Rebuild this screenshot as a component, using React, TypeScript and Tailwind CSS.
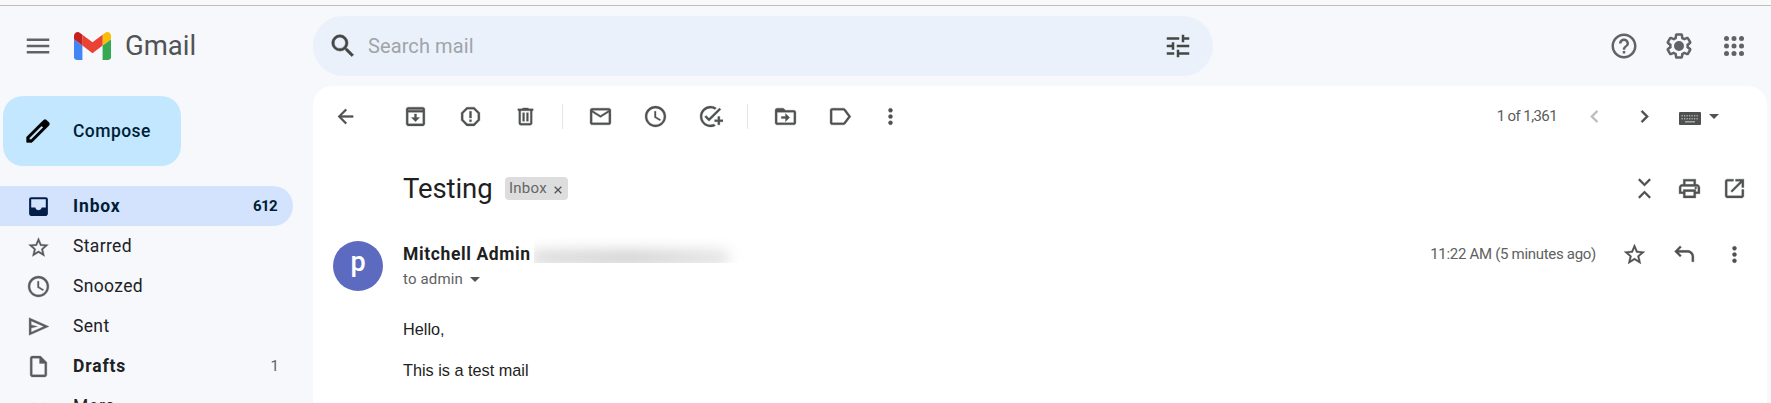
import React from 'react';
import {
  MdMenu, MdSearch, MdTune, MdHelpOutline, MdArrowBack, MdMailOutline, MdAccessTime, MdAddTask,
  MdMoreVert, MdChevronLeft, MdChevronRight, MdStarBorder, MdOutlinePrint,
} from 'react-icons/md';

type IconProps = { className?: string };

function Svg({ d, className }: IconProps & { d: string }) {
  return (
    <svg viewBox="0 0 24 24" fill="currentColor" fillRule="evenodd" className={className}>
      <path d={d} />
    </svg>
  );
}

const INBOX = 'M19 3H5C3.9 3 3 3.9 3 5v14c0 1.1.9 2 2 2h14c1.1 0 2-.9 2-2V5c0-1.1-.9-2-2-2zM5 5h14v8h-4c0 1-1 2.5-3 2.5S9 14 9 13H5z';
const ARCHIVE = 'M19 3H5C3.9 3 3 3.9 3 5v14c0 1.1.9 2 2 2h14c1.1 0 2-.9 2-2V5c0-1.1-.9-2-2-2zM5 5.2h14v.8H5zM5 8h14v11H5zM11 9.5h2V13h3l-4 4-4-4h3z';
const SPAM = 'M8.3 3h7.4L21 8.3v7.4L15.7 21H8.3L3 15.7V8.3zM9.1 5L5 9.1v5.8L9.1 19h5.8l4.1-4.1V9.1L14.9 5zM11 7h2v6.5h-2zM11 15h2v2h-2z';
const TRASH = 'M15 4V3H9v1H4v2h1v13c0 1.1.9 2 2 2h10c1.1 0 2-.9 2-2V6h1V4zM7 6h10v13H7zM9 8h2v9H9zM13 8h2v9h-2z';
const MOVE = 'M20 6h-8l-2-2H4c-1.1 0-2 .9-2 2v12c0 1.1.9 2 2 2h16c1.1 0 2-.9 2-2V8c0-1.1-.9-2-2-2zM4 8h16v10H4zM12 9l4 4-4 4v-3H8v-2h4z';
const LABEL = 'M4 4h11c.7 0 1.3.3 1.6.8L22 12l-5.4 7.2c-.3.5-.9.8-1.6.8H4c-1.1 0-2-.9-2-2V6c0-1.1.9-2 2-2zM4 6v12h11l4.5-6L15 6z';
const SEND = 'M3 3.5v17L22 12zM5 6.6L17.1 12 5 17.4V13.5L11 12 5 10.5z';
const DRAFT = 'M14 2H6c-1.1 0-2 .9-2 2v16c0 1.1.9 2 2 2h12c1.1 0 2-.9 2-2V8zM6 4h7v5h5v11H6z';
const GEAR = 'M13.85 22.25h-3.7c-.74 0-1.36-.54-1.45-1.27l-.27-1.89c-.27-.14-.53-.29-.79-.46l-1.8.72c-.7.26-1.47-.03-1.81-.65L2.2 15.53c-.35-.66-.2-1.44.36-1.88l1.53-1.19c-.01-.15-.02-.3-.02-.46 0-.15.01-.31.02-.46l-1.52-1.19c-.59-.45-.74-1.26-.37-1.88l1.85-3.19c.34-.62 1.11-.9 1.79-.63l1.81.73c.26-.17.52-.32.78-.46l.27-1.91c.09-.7.71-1.25 1.44-1.25h3.7c.74 0 1.36.54 1.45 1.27l.27 1.89c.27.14.53.29.79.46l1.8-.72c.71-.26 1.48.03 1.82.65l1.84 3.18c.36.66.2 1.44-.36 1.88l-1.52 1.19c.01.15.02.3.02.46s-.01.31-.02.46l1.52 1.19c.56.45.72 1.23.37 1.86l-1.86 3.22c-.34.62-1.11.9-1.8.63l-1.8-.72c-.26.17-.52.32-.78.46l-.27 1.91c-.1.68-.72 1.22-1.46 1.22zm-3.23-2h2.76l.37-2.55.53-.22c.44-.18.88-.44 1.34-.78l.45-.34 2.38.96 1.38-2.4-2.03-1.58.07-.56c.03-.26.06-.51.06-.78s-.03-.53-.06-.78l-.07-.56 2.03-1.58-1.39-2.4-2.39.96-.45-.35c-.42-.32-.87-.58-1.33-.77l-.52-.22-.37-2.55h-2.76l-.37 2.55-.53.21c-.44.19-.88.44-1.34.79l-.45.33-2.38-.95-1.39 2.39 2.03 1.58-.07.56a7 7 0 0 0-.06.79c0 .26.02.53.06.78l.07.56-2.03 1.58 1.38 2.4 2.39-.96.45.35c.43.33.86.58 1.33.77l.53.22zM12 8a4 4 0 1 0 0 8 4 4 0 0 0 0-8z';
const OPEN = 'M11 3H5c-1.1 0-2 .9-2 2v14c0 1.1.9 2 2 2h14c1.1 0 2-.9 2-2v-6h-2v6H5V5h6zM13 3h8v8h-2V6.4l-9.3 9.3-1.4-1.4L17.6 5H13z';
const REPLY = 'M7.7 3.7L9.1 5.1 6.2 8H15c3.3 0 6 2.7 6 6v5h-2v-5c0-2.2-1.8-4-4-4H6.2l2.9 2.9-1.4 1.4L2.4 9z';
const COLLAPSE = 'M6 3.9L7.4 2.5 12 7.1l4.6-4.6L18 3.9l-6 6zM6 20.1l1.4 1.4 4.6-4.6 4.6 4.6 1.4-1.4-6-6z';
const PENCIL = 'M20.41 4.94l-1.35-1.35c-.78-.78-2.05-.78-2.83 0L3 16.82V21h4.18L20.41 7.77c.79-.78.79-2.05 0-2.83zM6.41 19.06L5 19v-1.36l9.82-9.82 1.41 1.41z';

function Logo() {
  return (
    <svg viewBox="52 42 88 66" className="h-[28px] w-[37px] shrink-0">
      <path fill="#4285f4" d="M58 108h14V74L52 59v43c0 3.32 2.69 6 6 6" />
      <path fill="#34a853" d="M120 108h14c3.32 0 6-2.69 6-6V59l-20 15" />
      <path fill="#fbbc04" d="M120 48v26l20-15v-8c0-7.42-8.47-11.65-14.4-7.2" />
      <path fill="#ea4335" d="M72 74V48l24 18 24-18v26L96 92" />
      <path fill="#c5221f" d="M52 51v8l20 15V48l-5.6-4.2c-5.94-4.45-14.4-.22-14.4 7.2" />
    </svg>
  );
}

function Apps() {
  return (
    <svg viewBox="0 0 24 24" fill="currentColor" className="size-[30px]">
      {[6, 12, 18].map((y) => [6, 12, 18].map((x) => <circle key={`${x}-${y}`} cx={x} cy={y} r="2" />))}
    </svg>
  );
}

function Keyboard() {
  return (
    <svg viewBox="0 0 22 13" className="h-[13px] w-[22px]">
      <rect width="22" height="13" rx="1" fill="#4f5150" />
      {[3, 6].map((y) => [2.5, 5, 7.5, 10, 12.5, 15, 17.5].map((x) => (
        <rect key={`${x}-${y}`} x={x} y={y} width="1.3" height="1.5" fill="#aaa" />
      )))}
      <rect x="6" y="9.2" width="10" height="1.2" fill="#bbb" />
    </svg>
  );
}

function Caret() {
  return (
    <svg viewBox="0 0 10 5" className="h-[5px] w-[10px]" fill="#505352">
      <path d="M0 0h10L5 5z" />
    </svg>
  );
}

function Cell({ children }: { children: React.ReactNode }) {
  return <button className="flex w-[55px] shrink-0 justify-center">{children}</button>;
}

function NavRow({ icon, label, count, active, bold }: {
  icon: React.ReactNode; label: string; count?: string; active?: boolean; bold?: boolean;
}) {
  const row = active ? 'bg-[#d3e3fd] text-[#001d35]' : 'text-[#202124]';
  const weight = active || bold ? 'font-bold tracking-[0.85px]' : 'tracking-[0.35px]';
  return (
    <a className={`flex h-10 w-[293px] shrink-0 items-center rounded-r-[20px] pl-[26px] pr-[15px] ${row}`}>
      <span className={active ? 'text-[#041e49]' : 'text-[#5a5c5c] [&_svg]:stroke-current [&_svg]:stroke-[0.3px]'}>{icon}</span>
      <span className={`ml-[22px] flex-1 text-[17.5px] ${weight}`}>{label}</span>
      {count && <span className={active ? 'mr-px text-[15px] font-bold tracking-[-0.6px]' : '-mr-px text-[15px] text-[#5f6368]'}>{count}</span>}
    </a>
  );
}

function Header() {
  return (
    <header className="flex h-[80px] shrink-0 items-center pl-[23px] pr-[22px] text-[#5f6368]">
      <MdMenu className="size-[30px]" />
      <div className="ml-[21px] flex w-[239px] items-center">
        <Logo />
        <span className="ml-[14px] text-[27.5px] text-[#505355]">Gmail</span>
      </div>
      <div className="flex h-[60px] w-[900px] items-center rounded-full bg-[#eaf1fb] pl-[15px] pr-[20px] text-[#444746]">
        <MdSearch className="size-[30px] stroke-current stroke-[0.4px]" />
        <span className="ml-[9px] flex-1 pl-px text-[20px] tracking-[0.1px] text-[#a0a4a9]">Search mail</span>
        <MdTune className="size-[30px]" />
      </div>
      <div className="ml-auto flex gap-[25px]">
        <MdHelpOutline className="size-[30px]" />
        <Svg d={GEAR} className="size-[30px]" />
        <Apps />
      </div>
    </header>
  );
}

function Sidebar() {
  return (
    <nav className="flex w-[313px] shrink-0 flex-col pt-[10px]">
      <button className="mb-[20px] ml-[3px] flex h-[70px] w-[178px] shrink-0 items-center rounded-[20px] bg-[#c2e7ff] pl-[20px] text-[17.5px] font-medium tracking-[0.45px] text-[#001d35]">
        <Svg d={PENCIL} className="size-[30px] stroke-black stroke-[0.6px] text-black" />
        <span className="ml-[20px]">Compose</span>
      </button>
      <NavRow active icon={<Svg d={INBOX} className="size-[25px]" />} label="Inbox" count="612" />
      <NavRow icon={<MdStarBorder className="mt-[2px] size-[25px] scale-95" />} label="Starred" />
      <NavRow icon={<MdAccessTime className="size-[25px]" />} label="Snoozed" />
      <NavRow icon={<Svg d={SEND} className="size-[25px]" />} label="Sent" />
      <NavRow bold icon={<Svg d={DRAFT} className="size-[25px]" />} label="Drafts" count="1" />
      <NavRow
        icon={<svg viewBox="0 0 24 24" className="size-[25px]" fill="none"><path d="M6 9l6 6 6-6" strokeWidth="2" /></svg>}
        label="More"
      />
    </nav>
  );
}

function Toolbar() {
  return (
    <div className="flex h-[61px] shrink-0 items-center pl-[5px] text-[#4f5251] [&_button_svg]:stroke-current [&_button_svg]:stroke-[0.3px]">
      <Cell><MdArrowBack className="size-[23px]" /></Cell>
      <div className="w-[15px]" />
      <Cell><Svg d={ARCHIVE} className="size-[25px]" /></Cell>
      <Cell><Svg d={SPAM} className="size-[25px]" /></Cell>
      <Cell><Svg d={TRASH} className="size-[23px]" /></Cell>
      <div className="ml-[9px] mr-[10px] h-[25px] w-px bg-[#e6e6e6]" />
      <Cell><MdMailOutline className="size-[25px]" /></Cell>
      <Cell><MdAccessTime className="size-[25px]" /></Cell>
      <Cell><MdAddTask className="size-[25px]" /></Cell>
      <div className="ml-[9px] mr-[10px] h-[25px] w-px bg-[#e6e6e6]" />
      <Cell><Svg d={MOVE} className="size-[25px]" /></Cell>
      <Cell><Svg d={LABEL} className="size-[25px]" /></Cell>
      <Cell><MdMoreVert className="-ml-[10px] size-[25px]" /></Cell>
      <span className="ml-auto text-[15px] tracking-[-0.6px] text-[#5a5d5c]">1 of 1,361</span>
      <MdChevronLeft className="ml-[25px] size-[25px] stroke-current stroke-[0.3px] text-[#bcbdbd]" />
      <MdChevronRight className="ml-[25px] size-[25px] stroke-current stroke-[0.4px]" />
      <span className="ml-[22px] mt-[3px]"><Keyboard /></span>
      <span className="-mt-px ml-[8px] mr-[48px]"><Caret /></span>
    </div>
  );
}

function Message() {
  return (
    <>
      <div className="flex h-[83px] shrink-0 items-center pl-[90px] pr-[20px] text-[#4f5251]">
        <h1 className="w-[90px] whitespace-nowrap text-[27.5px] tracking-[-0.1px] text-[#1f1f1f]">Testing</h1>
        <span className="ml-[12px] flex h-[23px] w-[63px] items-center rounded-[4px] bg-[#ddd] pl-[4px] text-[15px] tracking-[0.25px] text-[#666]">
          Inbox
          <svg viewBox="0 0 8 8" className="ml-[7px] mt-[3px] size-[8px]" stroke="#555" strokeWidth="1.3"><path d="M.7.7l6.6 6.6M7.3.7L.7 7.3" /></svg>
        </span>
        <div className="ml-auto flex gap-[20px] [&_svg]:stroke-current [&_svg]:stroke-[0.3px]">
          <Svg d={COLLAPSE} className="size-[25px]" />
          <MdOutlinePrint className="size-[25px]" />
          <Svg d={OPEN} className="size-[25px]" />
        </div>
      </div>
      <div className="flex h-[72px] shrink-0 pl-[20px] pr-[20px] pt-[11px]">
        <div className="flex size-[50px] items-center justify-center rounded-full bg-[#5c6bc0] pb-[7px] text-[27px] font-medium text-white">p</div>
        <div className="ml-[20px]">
          <div className="flex h-[27px] items-center">
            <span className="whitespace-nowrap text-[17.5px] font-bold tracking-[0.62px] text-[#1f1f1f]">Mitchell Admin</span>
            <div className="mt-[-10px] ml-[3px] flex h-[26px] w-[214px] items-end overflow-hidden">
              <div className="mb-[-3px] ml-[-4px] h-[16px] w-[200px] rounded-full bg-linear-to-r from-[#dcdcdc] via-[#d0d0d0] to-[#e4e4e4] blur-[7px]" />
            </div>
          </div>
          <div className="flex h-[22px] items-center text-[15px] tracking-[0.15px] text-[#5e6160]">
            to admin
            <span className="ml-[7px]"><Caret /></span>
          </div>
        </div>
        <div className="ml-auto flex h-[26px] items-center text-[#4f5251] [&_svg]:stroke-current [&_svg]:stroke-[0.3px]">
          <span className="text-[15px] tracking-[-0.3px] text-[#5e6160]">11:22 AM (5 minutes ago)</span>
          <MdStarBorder className="ml-[26px] size-[25px]" />
          <Svg d={REPLY} className="ml-[25px] size-[25px]" />
          <MdMoreVert className="ml-[25px] size-[25px]" />
        </div>
      </div>
      <div className="flex flex-col gap-[21px] pl-[90px] pt-[17px] font-['Liberation_Sans',sans-serif] text-[16.25px] leading-[20px] text-[#222]">
        <p>Hello,</p>
        <p>This is a test mail</p>
      </div>
    </>
  );
}

export default function App() {
  return (
    <div className="flex h-[403px] w-[1771px] flex-col overflow-hidden bg-[#f6f8fc] font-['Roboto',sans-serif] [&_path[fill=none]]:stroke-none">
      <div className="h-[6px] shrink-0 border-b border-[#bfbfc3] bg-[#f9f9f9]" />
      <Header />
      <div className="flex min-h-0 flex-1">
        <Sidebar />
        <main className="mr-[4px] flex flex-1 flex-col overflow-hidden rounded-t-[20px] bg-white">
          <Toolbar />
          <Message />
        </main>
      </div>
    </div>
  );
}
